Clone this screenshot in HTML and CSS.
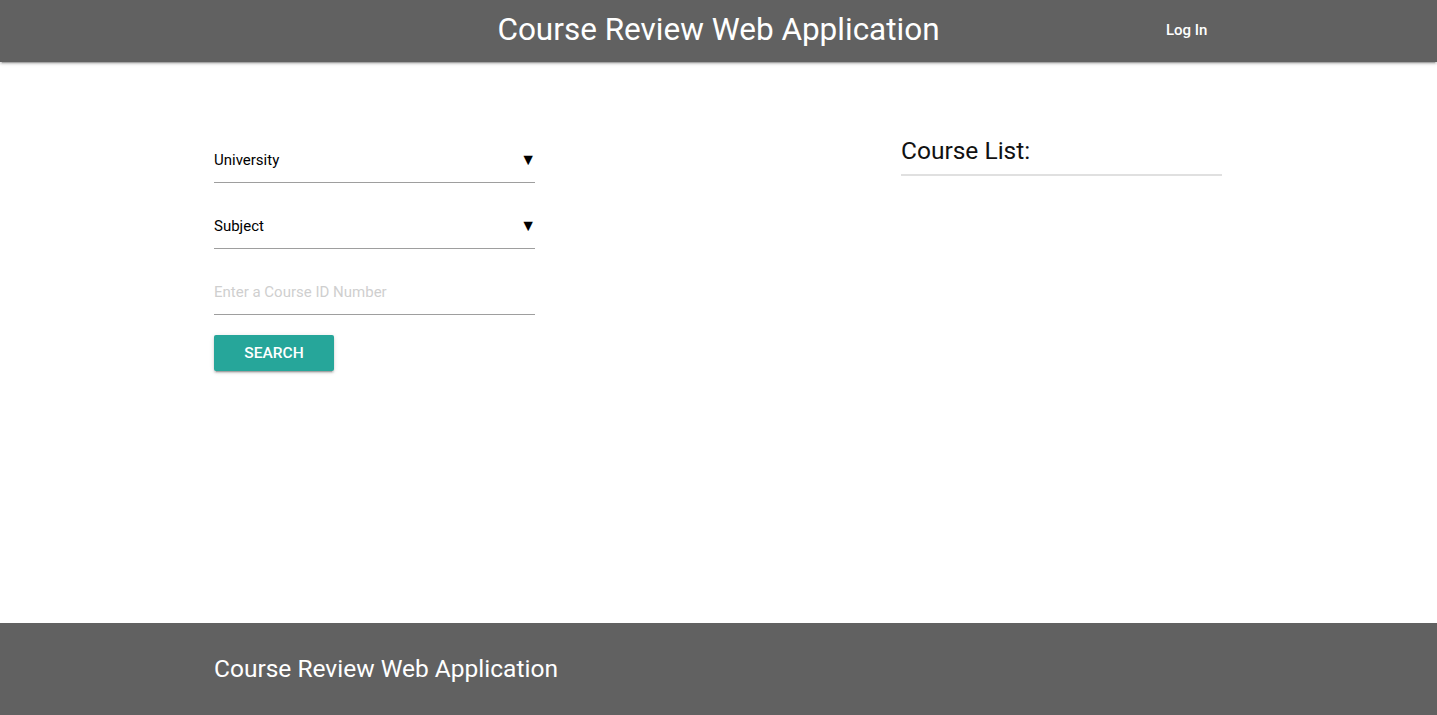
FILE: index.html
```html
<!DOCTYPE html>
<html>
<head>
<meta charset="utf-8">
<link rel="stylesheet" href="styles.css">
</head>
<body>
<header class="topbar">
  <div class="topbar-inner">
    <div class="brand">Course Review Web Application</div>
    <a class="login" href="#">Log In</a>
  </div>
</header>
<main class="main">
  <div class="grid">
    <section class="search">
      <div class="field select">
        <span>University</span>
        <span class="caret">&#9660;</span>
      </div>
      <div class="field select">
        <span>Subject</span>
        <span class="caret">&#9660;</span>
      </div>
      <div class="field input">
        <span class="placeholder">Enter a Course ID Number</span>
      </div>
      <button class="btn">SEARCH</button>
    </section>
    <div></div>
    <section class="list">
      <h2 class="list-title">Course List:</h2>
    </section>
  </div>
</main>
<footer class="footer">
  <div class="footer-inner">
    <h3 class="footer-title">Course Review Web Application</h3>
  </div>
</footer>
</body>
</html>
```
FILE: styles.css
```css
html, body {
  margin: 0;
  padding: 0;
}
body {
  font-family: Roboto, "Noto Sans", sans-serif;
  color: #000;
  background: #fff;
  height: 715px;
  display: flex;
  flex-direction: column;
  overflow: hidden;
}
.topbar {
  background: #616161;
  height: 62px;
  box-shadow: 0 2px 2px 0 rgba(0,0,0,0.14), 0 1px 5px 0 rgba(0,0,0,0.12), 0 3px 1px -2px rgba(0,0,0,0.2);
  position: relative;
  z-index: 2;
}
.topbar-inner {
  position: relative;
  height: 62px;
  display: flex;
  justify-content: center;
  align-items: center;
}
.brand {
  color: #fff;
  font-size: 31.5px;
  line-height: 54px;
  margin-bottom: 2px;
}
.login {
  position: absolute;
  left: 1166px;
  top: 0;
  line-height: 60px;
  color: #fff;
  text-decoration: none;
  font-size: 15px;
  font-weight: 500;
}
.main {
  flex: 1;
  padding-top: 75px;
}
.grid {
  width: 1008px;
  margin-left: 214px;
  display: grid;
  grid-template-columns: 321px 1fr 321px;
}
.field {
  height: 45px;
  border-bottom: 1px solid #9e9e9e;
  display: flex;
  align-items: center;
  justify-content: space-between;
  font-size: 15px;
  margin-bottom: 20px;
}
.field.input {
  margin-bottom: 20px;
}
.caret {
  font-size: 16px;
  margin-right: -1px;
}
.placeholder {
  color: #cfcfcf;
}
.btn {
  width: 120px;
  height: 36px;
  border: none;
  border-radius: 2px;
  background: #26a69a;
  color: #fff;
  font-family: Roboto, sans-serif;
  font-size: 15.5px;
  font-weight: 500;
  box-shadow: 0 2px 2px 0 rgba(0,0,0,0.14), 0 1px 5px 0 rgba(0,0,0,0.12), 0 3px 1px -2px rgba(0,0,0,0.2);
  padding: 0;
}
.list {
  margin-top: -3px;
}
.list-title {
  margin: 0;
  font-size: 24.5px;
  font-weight: 400;
  line-height: 34px;
  padding-bottom: 6px;
  border-bottom: 2px solid #e0e0e0;
  color: #111;
}
.footer {
  background: #616161;
  height: 92px;
}
.footer-inner {
  padding-left: 214px;
  padding-top: 30px;
}
.footer-title {
  margin: 0;
  color: #fff;
  font-size: 24.5px;
  font-weight: 400;
  line-height: 32px;
}
```
